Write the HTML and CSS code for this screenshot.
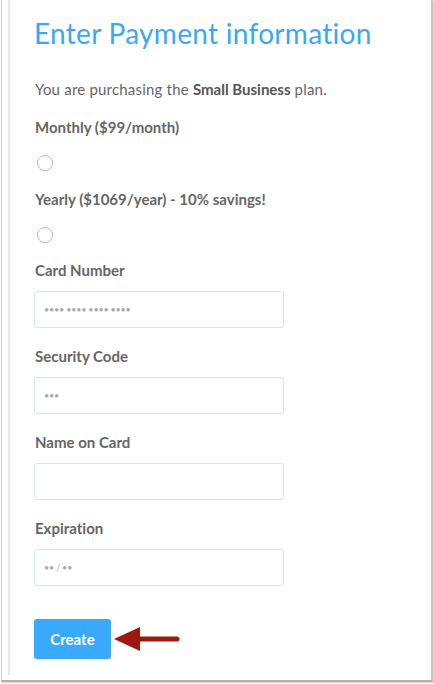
FILE: index.html
```html
<!DOCTYPE html>
<html>
<head>
<meta charset="utf-8">
<link rel="stylesheet" href="styles.css">
</head>
<body>
<div class="frame">
  <div class="page">
    <h1 class="title">Enter Payment information</h1>
    <p class="intro">You are purchasing the <strong>Small Business</strong> plan.</p>
    <div class="option">
      <div class="label">Monthly ($99/month)</div>
      <span class="radio"></span>
    </div>
    <div class="option">
      <div class="label">Yearly ($1069/year) - 10% savings!</div>
      <span class="radio"></span>
    </div>
    <div class="field">
      <div class="label">Card Number</div>
      <div class="input"><span class="ph">•••• •••• •••• ••••</span></div>
    </div>
    <div class="field">
      <div class="label">Security Code</div>
      <div class="input"><span class="ph">•••</span></div>
    </div>
    <div class="field">
      <div class="label">Name on Card</div>
      <div class="input"></div>
    </div>
    <div class="field">
      <div class="label">Expiration</div>
      <div class="input"><span class="ph">•• / ••</span></div>
    </div>
    <div class="actions">
      <button class="btn">Create</button>
      <svg class="arrow" width="66" height="28" viewBox="0 0 66 28">
        <polygon points="0,14 26,2 26,26" fill="#a0170f"/>
        <line x1="24" y1="14" x2="63" y2="14" stroke="#a0170f" stroke-width="5" stroke-linecap="round"/>
      </svg>
    </div>
  </div>
</div>
</body>
</html>
```
FILE: styles.css
```css
html, body {
  margin: 0;
  padding: 0;
  background: #fff;
}
body {
  width: 434px;
  height: 684px;
  overflow: hidden;
  font-family: Lato, "Liberation Sans", sans-serif;
  color: #666;
  font-variant-ligatures: none;
}
.frame {
  margin-left: 1px;
  width: 432px;
  height: 682px;
  box-sizing: border-box;
  border-left: 1px solid #cfcfcf;
  border-right: 2px solid #c4c4c4;
  border-bottom: 2px solid #b0b0b0;
  box-shadow: 1px 1px 1px rgba(0,0,0,0.15);
  padding-left: 6px;
}
.page {
  height: 675px;
  border-left: 2px solid #e3e6ea;
  padding-left: 25px;
  box-sizing: border-box;
  padding-top: 14px;
}
.title {
  margin: 0 0 0 -1px;
  font-weight: 400;
  font-size: 28px;
  line-height: 38px;
  letter-spacing: 0.3px;
  color: #3aa8f8;
}
.intro {
  margin: 27px 0 0;
  font-size: 15px;
  line-height: 20px;
  letter-spacing: 0.2px;
}
.intro strong {
  color: #555;
  letter-spacing: 0;
}
.label {
  font-size: 15px;
  font-weight: 700;
  line-height: 20px;
  color: #666;
}
.option {
  margin-top: 18px;
}
.radio {
  display: block;
  width: 14px;
  height: 14px;
  border: 1px solid #bcbcbc;
  border-radius: 50%;
  margin: 18px 0 0 2px;
}
.field {
  margin-top: 18px;
}
.option + .field {
  margin-top: 17px;
}
.field .input {
  margin-top: 11px;
  width: 250px;
  height: 37px;
  box-sizing: border-box;
  border: 1px solid #cfe6f8;
  border-radius: 3px;
  display: flex;
  align-items: center;
  padding-left: 9px;
  margin-left: -1px;
}
.ph {
  font-size: 9px;
  letter-spacing: -0.2px;
  color: #a9a9a9;
}
.actions {
  margin-top: 33px;
  display: flex;
  align-items: center;
  margin-left: -1px;
}
.btn {
  width: 77px;
  height: 40px;
  border: none;
  border-radius: 3px;
  background: #39a9fc;
  color: #fff;
  font-family: Lato, "Liberation Sans", sans-serif;
  font-size: 15px;
  font-weight: 700;
  padding: 0;
}
.arrow {
  margin-left: 3px;
}
```
